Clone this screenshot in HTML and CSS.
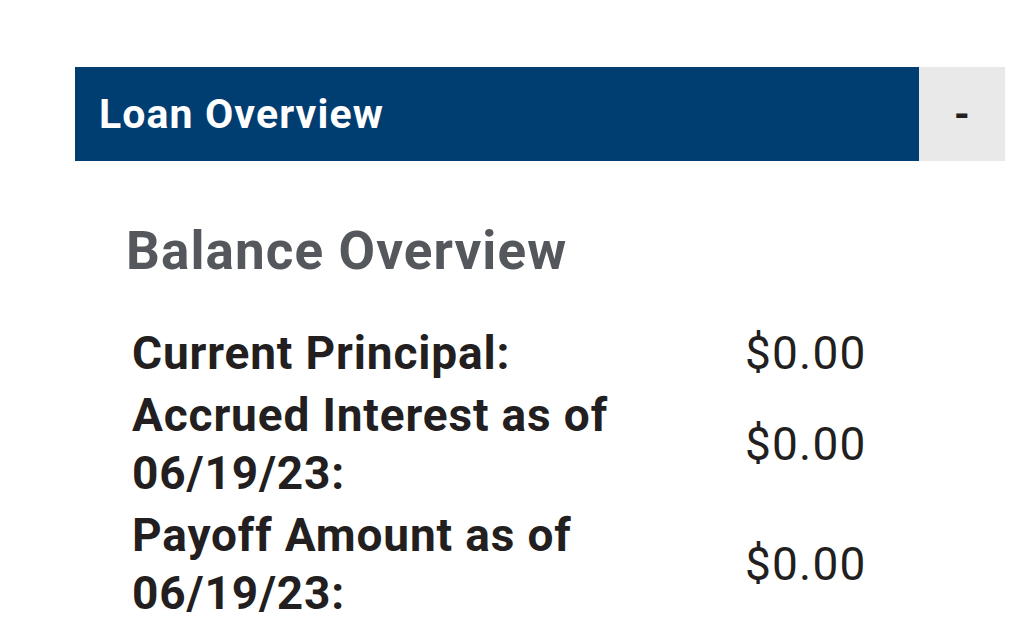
FILE: index.html
```html
<!DOCTYPE html>
<html>
<head>
<meta charset="utf-8">
<link rel="stylesheet" href="styles.css">
</head>
<body>
<section class="panel">
  <div class="panel-header">
    <div class="panel-title">Loan Overview</div>
    <div class="panel-toggle">-</div>
  </div>
  <div class="panel-body">
    <h2 class="section-title">Balance Overview</h2>
    <table class="balance-table">
      <tr>
        <th>Current Principal:</th>
        <td>$0.00</td>
      </tr>
      <tr>
        <th>Accrued Interest as of 06/19/23:</th>
        <td>$0.00</td>
      </tr>
      <tr>
        <th>Payoff Amount as of 06/19/23:</th>
        <td>$0.00</td>
      </tr>
    </table>
  </div>
</section>
</body>
</html>
```

FILE: styles.css
```css
html, body {
  margin: 0;
  padding: 0;
  background: #ffffff;
}

body {
  font-family: Roboto, "Liberation Sans", sans-serif;
  color: #231f20;
}

.panel {
  margin: 67px 0 0 75px;
  width: 930px;
}

.panel-header {
  display: flex;
  height: 94px;
}

.panel-title {
  flex: 1;
  background: #003d70;
  color: #ffffff;
  font-weight: 700;
  font-size: 41px;
  letter-spacing: 1.1px;
  display: flex;
  align-items: center;
  padding-left: 24px;
}

.panel-toggle {
  width: 86px;
  background: #e9e9e9;
  color: #231f20;
  font-weight: 700;
  font-size: 40px;
  display: flex;
  align-items: center;
  justify-content: center;
}

.panel-body {
  padding: 0 0 0 51px;
}

.section-title {
  margin: 58px 0 0 0;
  font-size: 53px;
  font-weight: 700;
  color: #54575c;
  line-height: 64px;
  letter-spacing: 1.1px;
}

.balance-table {
  margin-top: 39px;
  border-collapse: collapse;
  margin-left: 6px;
}

.balance-table th {
  text-align: left;
  font-weight: 700;
  font-size: 46px;
  letter-spacing: 0.85px;
  line-height: 58px;
  width: 613px;
  padding: 2px 0;
  vertical-align: middle;
}

.balance-table td {
  font-size: 46px;
  letter-spacing: 1.2px;
  line-height: 58px;
  padding: 2px 0;
  vertical-align: middle;
}
```
